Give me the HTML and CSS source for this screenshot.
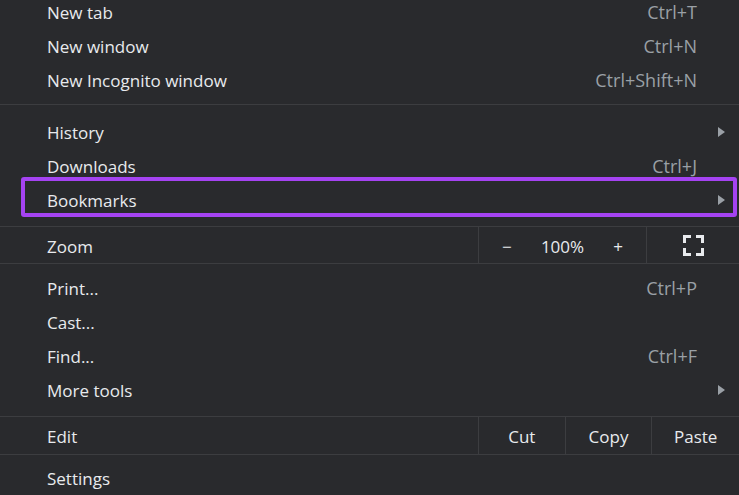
FILE: index.html
```html
<!DOCTYPE html>
<html>
<head>
	<meta charset="utf-8">
	<title>menu</title>
	<link rel="stylesheet" href="styles.css">
</head>
<body>
	<!--menu-->
	<div class="menu">
		<div class="group first">
			<div class="item"><span class="label">New tab</span><span class="key">Ctrl+T</span><span class="slot"></span></div>
			<div class="item"><span class="label">New window</span><span class="key">Ctrl+N</span><span class="slot"></span></div>
			<div class="item"><span class="label">New Incognito window</span><span class="key">Ctrl+Shift+N</span><span class="slot"></span></div>
		</div>
		<div class="group wide">
			<div class="item"><span class="label">History</span><span class="slot"><i class="arrow"></i></span></div>
			<div class="item"><span class="label">Downloads</span><span class="key">Ctrl+J</span><span class="slot"></span></div>
			<div class="item marked"><span class="label">Bookmarks</span><span class="slot"><i class="arrow"></i></span></div>
		</div>
		<!--zoom-->
		<div class="cells zoom">
			<span class="label">Zoom</span>
			<div class="tools">
				<div class="trio">
					<span class="btn">&minus;</span>
					<span class="btn">100%</span>
					<span class="btn">+</span>
				</div>
				<span class="full">
					<svg width="21" height="21" viewBox="0 0 21 21" fill="none" stroke="#e8eaed" stroke-width="3">
						<path d="M1.5 8V1.5H8"/>
						<path d="M13 1.5H19.5V8"/>
						<path d="M19.5 13V19.5H13"/>
						<path d="M8 19.5H1.5V13"/>
					</svg>
				</span>
			</div>
		</div>
		<div class="group tools-group">
			<div class="item"><span class="label">Print...</span><span class="key">Ctrl+P</span><span class="slot"></span></div>
			<div class="item"><span class="label">Cast...</span><span class="slot"></span></div>
			<div class="item"><span class="label">Find...</span><span class="key">Ctrl+F</span><span class="slot"></span></div>
			<div class="item"><span class="label">More tools</span><span class="slot"><i class="arrow"></i></span></div>
		</div>
		<!--edit-->
		<div class="cells edit">
			<span class="label">Edit</span>
			<div class="trio">
				<span class="btn">Cut</span>
				<span class="btn">Copy</span>
				<span class="btn">Paste</span>
			</div>
		</div>
		<div class="group last">
			<div class="item"><span class="label">Settings</span><span class="slot"></span></div>
		</div>
	</div>
</body>
</html>
```
FILE: styles.css
```css
*{
    margin: 0;
    padding: 0;
    box-sizing: border-box;
}

html, body{
    width: 100%;
    height: 100%;
    overflow: hidden;
}

body{
    background-color: #292a2d;
    color: #e8eaed;
    font-family: "Open Sans", "Noto Sans", sans-serif;
    font-size: 17px;
}

.menu{
    margin-top: -6px;
}

.group{
    padding: 8px 0;
    border-bottom: 1px solid #3c3d40;
}

.group.first{
    padding-top: 0;
}

.group.wide{
    padding: 9px 0 10px;
}

.group.tools-group{
    padding: 6px 0 10px;
}

.group.last{
    padding-top: 5px;
    border-bottom: 0;
}

.item{
    height: 34px;
    display: flex;
    align-items: center;
    padding: 2px 14px 0 47px;
    position: relative;
}

.item .label{
    flex: 1;
}

.key{
    color: #9aa0a6;
    font-size: 18px;
}

.slot{
    width: 28px;
    display: flex;
    justify-content: flex-end;
}

.arrow{
    width: 0;
    height: 0;
    border-top: 5px solid transparent;
    border-bottom: 5px solid transparent;
    border-left: 7px solid #9aa0a6;
}

/* purple highlight */
.item.marked::after{
    content: "";
    position: absolute;
    left: 21px;
    right: 2px;
    top: -5px;
    bottom: -1px;
    border: 4px solid #a543f2;
    border-radius: 3px;
}

.cells{
    display: grid;
    grid-template-columns: 1fr 260px;
    border-bottom: 1px solid #3c3d40;
}

.cells .label{
    display: flex;
    align-items: center;
    padding: 2px 0 0 47px;
    border-right: 1px solid #3c3d40;
}

.zoom{
    height: 37px;
}

.edit{
    height: 38px;
}

.tools{
    display: grid;
    grid-template-columns: 167px 93px;
}

.trio{
    display: grid;
    grid-template-columns: repeat(3, 1fr);
}

.edit .btn{
    border-right: 1px solid #3c3d40;
}

.edit .btn:last-child{
    border-right: 0;
}

.btn{
    display: flex;
    align-items: center;
    justify-content: center;
    padding-top: 2px;
}

.full{
    display: flex;
    align-items: center;
    justify-content: center;
    border-left: 1px solid #3c3d40;
}
```
